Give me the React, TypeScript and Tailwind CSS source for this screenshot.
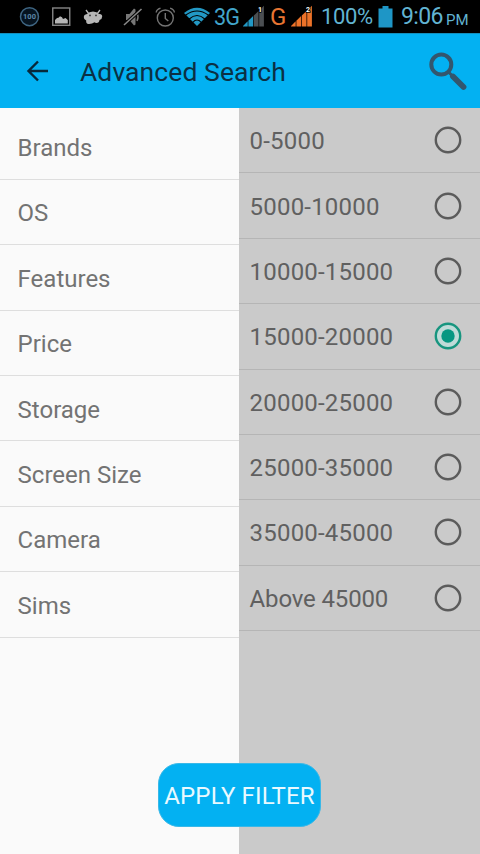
const categories = ['Brands', 'OS', 'Features', 'Price', 'Storage', 'Screen Size', 'Camera', 'Sims']

const prices = [
  '0-5000',
  '5000-10000',
  '10000-15000',
  '15000-20000',
  '20000-25000',
  '25000-35000',
  '35000-45000',
  'Above 45000',
]

const selectedPrice = '15000-20000'

function BadgeIcon() {
  return (
    <svg className="ml-[19px] h-[22px] w-[22px] shrink-0" viewBox="0 0 22 22">
      <circle cx="10.5" cy="10.7" r="9" fill="#06131f" stroke="#3f6683" strokeWidth="1.5" />
      <text x="10.5" y="13.4" textAnchor="middle" fontSize="7.5" fontWeight="700" fill="#5c88aa">
        100
      </text>
    </svg>
  )
}

function PictureIcon() {
  return (
    <svg className="ml-[11px] h-5 w-[19px] shrink-0" viewBox="0 0 19 20">
      <rect x="0.75" y="1" width="17" height="17.3" fill="none" stroke="#858585" strokeWidth="1.4" />
      <path d="M3 16.5v-3.500l2-2 1.500-.3 1.500-1.500 2 1 1 1.800 2.500-1 2.300 2v3.500z" fill="#b5b5b5" />
    </svg>
  )
}

function AndroidIcon() {
  return (
    <svg className="ml-3 h-4 w-5 shrink-0" viewBox="0 0 20 16">
      <path d="M3 1l3 4M17 1l-3 4" stroke="#b7b7b7" strokeWidth="1.300" />
      <path
        d="M4 5Q6 2.500 10 2.500T16 5q3.200-.3 3.200 2.500T16.500 11q-.3 3-3 3-1.500 0-2-.8-2.500 2-6 1.800Q2.800 14.800 3.200 11.500.8 11 .8 8.300T4 5z"
        fill="#b7b7b7"
      />
      <circle cx="7" cy="6.400" r="0.900" fill="#333" />
      <circle cx="13" cy="6.400" r="0.900" fill="#333" />
    </svg>
  )
}

function MutedIcon() {
  return (
    <svg className="ml-5 h-[22px] w-[20px] shrink-0" viewBox="0 0 20 22">
      <path d="M3 8h3.500L11 2.500l1.500 1v15l-1.500 1L6.500 14H3z" fill="#777" />
      <path d="M14 7q2 4 0 8" fill="none" stroke="#777" strokeWidth="1.500" />
      <path d="M1 19L18.500 3" stroke="#000" strokeWidth="3.400" />
      <path d="M1 19L18.500 3" stroke="#888" strokeWidth="1.600" />
    </svg>
  )
}

function AlarmIcon() {
  return (
    <svg className="ml-[12px] h-[22px] w-[21px] shrink-0" viewBox="0 0 21 22" fill="none" stroke="#747474" strokeWidth="1.400">
      <circle cx="10.300" cy="12" r="8" />
      <path d="M10.300 7v5.500l3 2.500M1.200 6.500q.3-3 4.300-4.300M19.400 6.500q-.3-3-4.300-4.300" />
    </svg>
  )
}

function WifiIcon() {
  return (
    <svg className="ml-2 h-[19px] w-[26px] shrink-0" viewBox="0 0 26 19">
      <path d="M0 6Q13-4.500 26 6L13 19z" fill="#2298c4" />
      <path d="M1.500 8.200Q13-.3 24.500 8.200M5.200 12Q13 5 20.800 12M8.800 15.300Q13 10.800 17.200 15.300" fill="none" stroke="#000" strokeWidth="1.100" />
    </svg>
  )
}

type SignalProps = {
  sim: string
  active: number
  color: string
}

function SignalIcon({ sim, active, color }: SignalProps) {
  const bars = [0, 1, 2, 3]
  return (
    <svg className="h-6 w-[22px] shrink-0" viewBox="0 0 22 24">
      {bars.map((i) => (
        <path
          key={i}
          d={`M${i * 5.4} 21.500V${21 - i * 5.2}l4.700-4.700V21.500z`}
          fill={i < active ? color : '#4b4f52'}
        />
      ))}
      <text x="17" y="6.500" textAnchor="middle" fontSize="7" fontWeight="700" fill="#fff" stroke="#000" strokeWidth="1.500" paintOrder="stroke">
        {sim}
      </text>
    </svg>
  )
}

function BatteryIcon() {
  return (
    <svg className="ml-[6px] h-[22px] w-[15px] shrink-0" viewBox="0 0 15 22">
      <path d="M4.500 0h6v2.500H14.500V21.500H.5V2.500h4z" fill="#1e96c6" />
    </svg>
  )
}

function StatusBar() {
  return (
    <div className="flex h-[34px] shrink-0 items-center overflow-hidden border-b border-[#138fbd] bg-black text-[24px] leading-8 text-[#62b4d2]">
      <BadgeIcon />
      <PictureIcon />
      <AndroidIcon />
      <MutedIcon />
      <AlarmIcon />
      <WifiIcon />
      <span className="ml-[4px] w-[29px] shrink-0 origin-left scale-x-90 tracking-[-1px] text-[#42a5cb]">3G</span>
      <SignalIcon sim="1" active={2} color="#2298c4" />
      <span className="ml-[5px] w-[21px] shrink-0 text-[#e87532]">G</span>
      <SignalIcon sim="2" active={4} color="#ed7329" />
      <span className="ml-[8px] w-[51px] shrink-0 text-[22px] tracking-[-0.4px]">100%</span>
      <BatteryIcon />
      <span className="ml-[8px] w-[45px] shrink-0 text-[23px] tracking-[-0.6px]">9:06</span>
      <span className="pt-[6px] text-[15px] leading-5">PM</span>
    </div>
  )
}

function Header() {
  return (
    <header className="flex h-[74px] shrink-0 items-center bg-[#03b1f2] text-[#0b3044]">
      <svg className="ml-[26px] h-6 w-6 shrink-0" viewBox="0 0 24 24" fill="none" stroke="#07293b" strokeWidth="2.400">
        <path d="M22 12H2.500M12 2.500L2.500 12l9.500 9.500" />
      </svg>
      <h1 className="ml-[30px] grow pt-[2px] text-[26.5px] leading-8 tracking-[0.08px]">Advanced Search</h1>
      <svg className="mr-[13px] h-10 w-[39px] shrink-0" viewBox="0 0 39 40" fill="none" stroke="#33566e">
        <circle cx="13.300" cy="13.600" r="10" strokeWidth="4" />
        <path d="M20.500 21l4 4" strokeWidth="3" />
        <path d="M25 25.500l10.500 10.500" strokeWidth="5.800" strokeLinecap="round" />
      </svg>
    </header>
  )
}

function Radio({ checked }: { checked: boolean }) {
  return (
    <svg className="h-7 w-7 shrink-0" viewBox="0 0 28 28">
      <circle cx="14" cy="14" r="12.200" fill={checked ? '#bfdbd8' : 'none'} stroke={checked ? '#17957f' : '#5b5b5b'} strokeWidth="2.400" />
      {checked && <circle cx="14" cy="14" r="6.700" fill="#079782" />}
    </svg>
  )
}

export default function App() {
  return (
    <div className="relative flex h-[854px] w-[480px] flex-col overflow-hidden bg-[#fafafa] font-['Roboto','Liberation_Sans',sans-serif]">
      <StatusBar />
      <Header />
      <main className="flex min-h-0 grow text-[24px] leading-7">
        <ul className="w-[239px] shrink-0 bg-[#fafafa] pt-[6.6px] text-[#737373]">
          {categories.map((name) => (
            <li key={name} className="flex h-[65.38px] items-center border-b border-[#dedede] pl-[17.6px] pt-[2.6px]">
              {name}
            </li>
          ))}
        </ul>
        <ul className="grow bg-[#cacaca] text-[#606060]">
          {prices.map((price) => (
            <li key={price} className="flex h-[65.38px] items-center justify-between border-b border-[#b5b5b5] pl-[10.6px] pr-[18px]">
              <span className={price.startsWith('Above') ? 'pt-[2px] tracking-[-0.15px]' : 'pt-[2px] tracking-[0.2px]'}>
                {price}
              </span>
              <Radio checked={price === selectedPrice} />
            </li>
          ))}
        </ul>
      </main>
      <button className="absolute left-[158px] top-[763px] h-[64px] w-[163px] whitespace-nowrap rounded-[21px] border border-[#38b8e8] bg-[#03b1f2] pt-[2px] text-[24px] tracking-[0.15px] text-[#e9f9ff]">
        APPLY FILTER
      </button>
    </div>
  )
}
